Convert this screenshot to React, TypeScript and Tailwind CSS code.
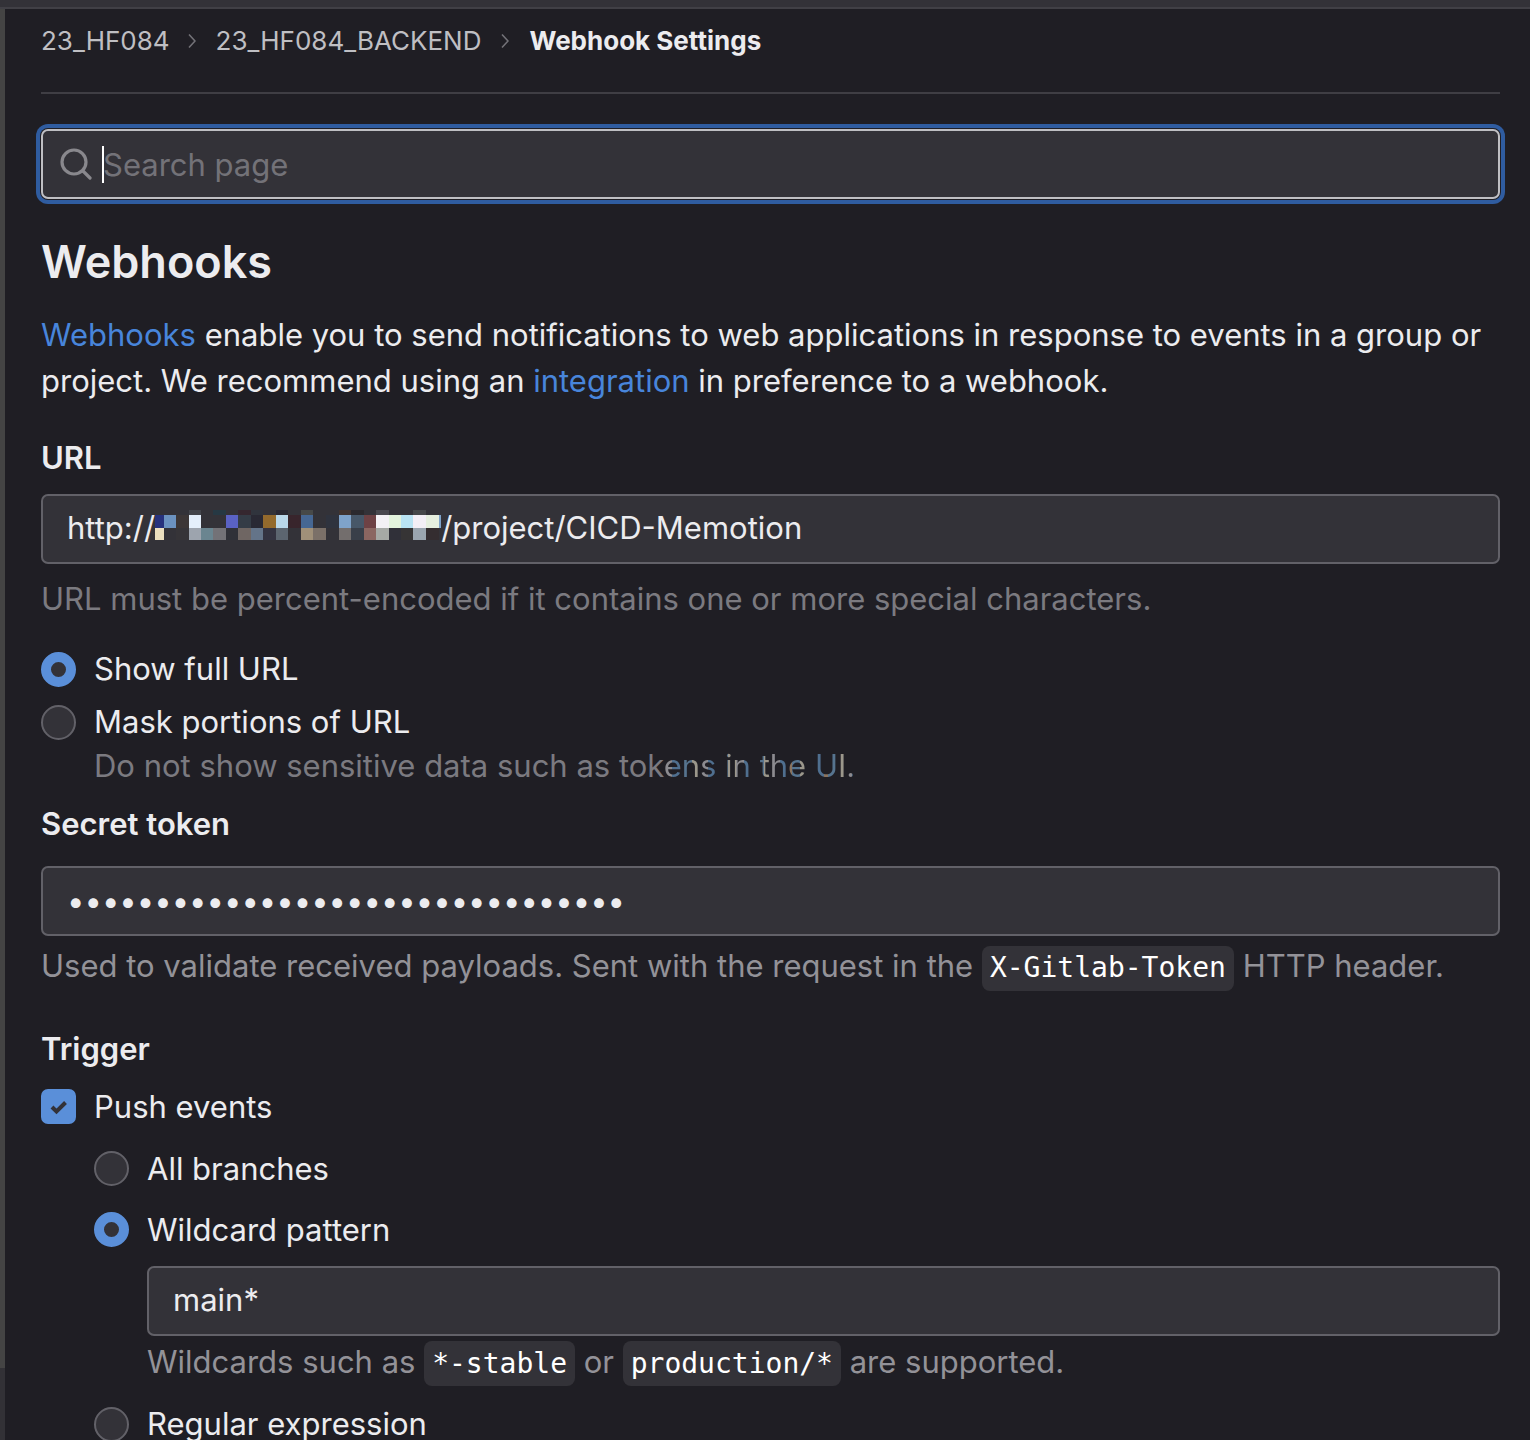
import clsx from "clsx";
import type { ReactNode } from "react";

const FIELD =
  "h-[70px] w-full rounded-[7px] border-2 border-[#626168] bg-[#333238] px-6 pb-[2px] text-[31px] text-[#ececef] outline-none";

// column edges of the redaction blocks, in thirds of a pixel
const EDGES = [
  0, 28, 64, 103, 139, 175, 214, 250, 289, 325, 364, 400, 439, 475, 514, 553,
  589, 628, 664, 703, 739, 775, 814, 853,
];

const BLOCKS = [
  {
    y: 0,
    h: 15,
    colors: [
      "", "", "", "#43454b", "", "#263843", "", "#35272f", "#30343d", "",
      "#292833", "", "#474948", "", "", "#413430", "#2b292d", "", "#49484e",
      "", "", "#454749", "",
    ],
  },
  {
    y: 15,
    h: 39,
    colors: [
      "#27327d", "#6b92c0", "#3c3636", "#e4effb", "", "", "#5a62c4",
      "#343c46", "#292934", "#936a2d", "#b9d7ea", "#38252c", "#466793", "",
      "#2f333e", "#7fa3ca", "#475768", "#6e4245", "#f3f1f5", "#e3f3dd",
      "#b9e3f3", "#f3eff6", "#e6efdf",
    ],
  },
  {
    y: 54,
    h: 36,
    colors: [
      "#ebdfbf", "", "#363438", "#9da4ae", "#6a8590", "#737277", "#303138",
      "#6f6663", "#647489", "#343341", "#5c6570", "", "#a09079", "#7b7068",
      "", "#736e6d", "#393f49", "#8b6661", "#a6a9a5", "#303039", "#363435",
      "#9aa5af", "#342d30",
    ],
  },
];

const Redacted = () => {
  return (
    <svg
      className="mb-1.5 h-[30px] w-[286px] shrink-0"
      viewBox="0 0 858 90"
      preserveAspectRatio="none"
      shapeRendering="crispEdges"
      aria-hidden="true"
    >
      {BLOCKS.map((row) =>
        row.colors.map((color, i) =>
          color ? (
            <rect
              key={`${row.y}-${i}`}
              x={EDGES[i]}
              y={row.y}
              width={EDGES[i + 1] - EDGES[i]}
              height={row.h}
              fill={color}
            />
          ) : null,
        ),
      )}
      <rect x="853" y="15" width="4" height="39" fill="#7fa3ca" />
    </svg>
  );
};

const Chevron = () => (
  <svg
    className="h-4 w-2"
    viewBox="0 0 8 16"
    fill="none"
    stroke="#737278"
    strokeWidth="1.6"
    aria-hidden="true"
  >
    <path d="M1 1.5 7 8l-6 6.5" />
  </svg>
);

const Radio: React.FC<{
  name: string;
  label: string;
  checked?: boolean;
  className?: string;
}> = (props) => {
  return (
    <label className={clsx("flex h-11 items-center gap-[18px]", props.className)}>
      <input
        type="radio"
        name={props.name}
        defaultChecked={props.checked}
        className="size-[35px] shrink-0 appearance-none rounded-full border-2 border-[#626168] bg-[#333238] checked:border-10 checked:border-[#5a8fd9]"
      />
      {props.label}
    </label>
  );
};

const Code: React.FC<{ children: ReactNode }> = (props) => {
  return (
    <code className="inline-flex h-[45px] items-center rounded-lg bg-[#333238] px-2 align-baseline font-['DejaVu_Sans_Mono',monospace] text-[28px] text-white">
      {props.children}
    </code>
  );
};

const App = () => {
  return (
    <div className="flex h-screen flex-col overflow-hidden bg-[#1f1e24] font-['Inter',sans-serif] text-[31px] leading-11 text-[#ececef]">
      <div className="h-[9px] shrink-0 border-b-2 border-[#414046] bg-[#333238]"></div>
      <div className="flex min-h-0 flex-1">
        <div className="flex w-[5px] shrink-0 flex-col">
          <div className="flex-1 bg-[#444444]"></div>
          <div className="h-[72px] bg-[#323136]"></div>
        </div>
        <main className="min-w-0 flex-1 pr-[30px] pl-9">
          <nav className="flex items-center border-b-2 border-[#3f3e44] pt-4 pb-[35px] text-[26px] leading-8">
            <a href="#" className="mr-[18px] text-[#bfbfc3]">
              23_HF084
            </a>
            <Chevron />
            <a href="#" className="mr-5 ml-5 text-[#bfbfc3]">
              23_HF084_BACKEND
            </a>
            <Chevron />
            <a href="#" className="ml-5 font-bold">
              Webhook Settings
            </a>
          </nav>

          {/* search */}
          <div className="relative mt-[35px]">
            <svg
              className="absolute top-[19px] left-[19px] size-8"
              viewBox="0 0 32 32"
              fill="none"
              stroke="#89888d"
              strokeWidth="3.2"
              strokeLinecap="round"
              aria-hidden="true"
            >
              <circle cx="14" cy="14" r="12" />
              <path d="m23 23 7 7" />
            </svg>
            <input
              type="search"
              aria-label="Search page"
              placeholder="Search page"
              className="block h-[70px] w-full rounded-[7px] border-2 border-[#bfbfc3] bg-[#333238] pr-6 pl-[60px] text-[31px] shadow-[0_0_0_1px_#1f1e24,0_0_0_5px_#2f5ca0] outline-none placeholder:text-[#737278]"
            />
            <span className="absolute top-[17px] left-[61px] h-[37px] w-[2px] bg-white"></span>
          </div>

          <h1 className="mt-[35px] text-[45px] leading-14 font-semibold">Webhooks</h1>
          <p className="mt-[22px] leading-[46px]">
            <a href="#" className="text-[#4885db]">
              Webhooks
            </a>{" "}
            enable you to send notifications to web applications in response to
            events in a group or project. We recommend using an{" "}
            <a href="#" className="text-[#4885db]">
              integration
            </a>{" "}
            in preference to a webhook.
          </p>

          {/* url */}
          <label htmlFor="url-host" className="mt-8 block font-semibold">
            URL
          </label>
          <div className={clsx(FIELD, "mt-[14px] flex items-center")}>
            <input
              id="url-host"
              type="text"
              defaultValue="http://"
              className="field-sizing-content shrink-0 outline-none"
            />
            <Redacted />
            <input
              type="text"
              aria-label="URL path"
              defaultValue="/project/CICD-Memotion"
              className="min-w-0 flex-1 outline-none"
            />
          </div>
          <p className="mt-[13px] text-[#7b7a80]">
            URL must be percent-encoded if it contains one or more special
            characters.
          </p>

          <Radio name="mask" label="Show full URL" checked className="mt-[26px]" />
          <Radio name="mask" label="Mask portions of URL" className="mt-[9px]" />
          <p className="pl-[53px] text-[#7b7a80]">
            Do not show sensitive data such as tok
            <span className="bg-[repeating-linear-gradient(90deg,#8c8b90_0_8px,#4f6f8f_8px_16px,#8a7460_16px_20px,#56748f_20px_28px,#9b978b_28px_36px)] bg-clip-text text-transparent">
              ens in the UI.
            </span>
          </p>

          {/* token */}
          <label htmlFor="token" className="mt-[14px] block font-semibold">
            Secret token
          </label>
          <input
            id="token"
            type="text"
            defaultValue={"•".repeat(32)}
            className={clsx(FIELD, "mt-5 block")}
          />
          <p className="mt-2 text-[#939298]">
            Used to validate received payloads. Sent with the request in the{" "}
            <Code>X-Gitlab-Token</Code> HTTP header.
          </p>

          {/* trigger */}
          <h2 className="mt-9 font-semibold">Trigger</h2>
          <label className="mt-[14px] flex h-11 items-center gap-[18px]">
            <span className="relative size-[35px] shrink-0">
              <input
                type="checkbox"
                defaultChecked
                className="peer block size-[35px] appearance-none rounded-[7px] border-2 border-[#626168] bg-[#333238] checked:border-[#5a8fd9] checked:bg-[#5a8fd9]"
              />
              <svg
                className="pointer-events-none absolute inset-0 hidden size-[35px] peer-checked:block"
                viewBox="0 0 35 35"
                fill="none"
                stroke="#333238"
                strokeWidth="4"
                aria-hidden="true"
              >
                <path d="m11 18 4.5 4.5 9-9" />
              </svg>
            </span>
            Push events
          </label>
          <div className="pl-[53px]">
            <Radio name="branch" label="All branches" className="mt-[18px]" />
            <Radio name="branch" label="Wildcard pattern" checked className="mt-[17px]" />
            <div className="pl-[53px]">
              <input
                type="text"
                aria-label="Wildcard pattern"
                defaultValue="main*"
                className={clsx(FIELD, "mt-[14px] block")}
              />
              <p className="mt-1 text-[#939298]">
                Wildcards such as <Code>*-stable</Code> or{" "}
                <Code>production/*</Code> are supported.
              </p>
            </div>
            <Radio name="branch" label="Regular expression" className="mt-4" />
          </div>
        </main>
      </div>
    </div>
  );
};

export default App;
